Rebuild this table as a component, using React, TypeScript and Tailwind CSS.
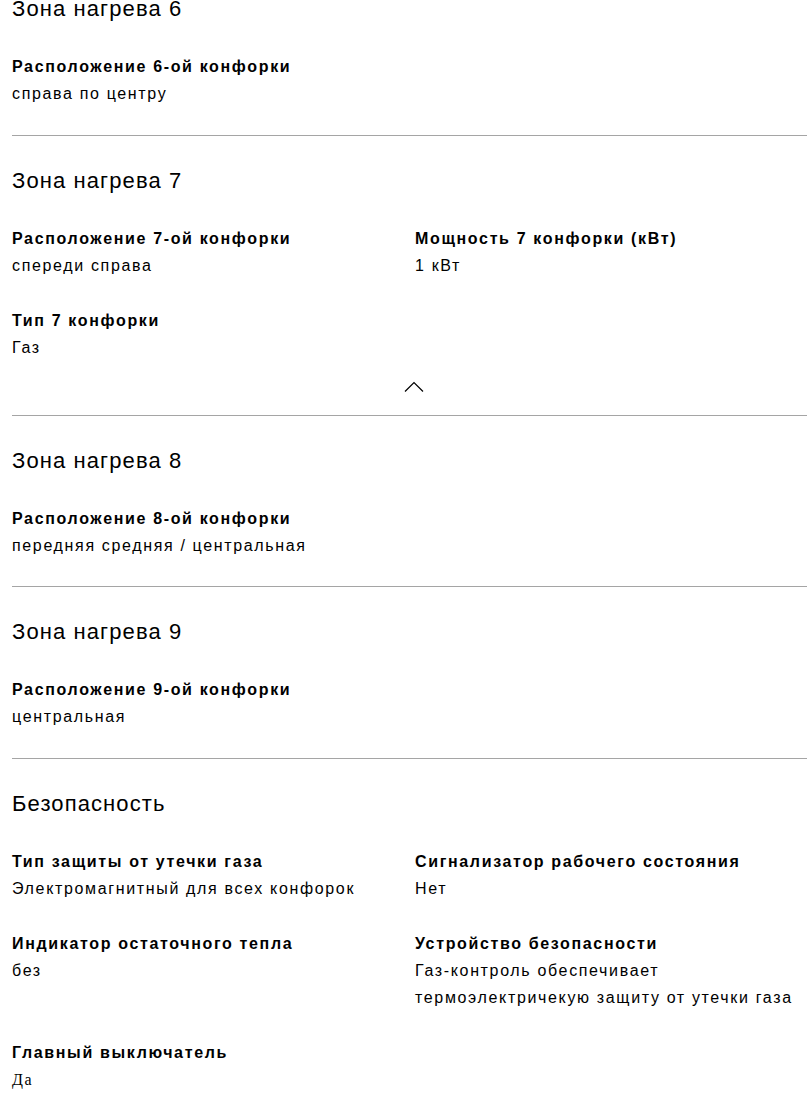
import { Fragment } from "react";

type Spec = { label: string; value: string[]; serif?: boolean };
type Section = { title: string; specs: Spec[]; collapsible?: boolean };

const sections: Section[] = [
  {
    title: "Зона нагрева 6",
    specs: [{ label: "Расположение 6-ой конфорки", value: ["справа по центру"] }],
  },
  {
    title: "Зона нагрева 7",
    collapsible: true,
    specs: [
      { label: "Расположение 7-ой конфорки", value: ["спереди справа"] },
      { label: "Мощность 7 конфорки (кВт)", value: ["1 кВт"] },
      { label: "Тип 7 конфорки", value: ["Газ"] },
    ],
  },
  {
    title: "Зона нагрева 8",
    specs: [
      { label: "Расположение 8-ой конфорки", value: ["передняя средняя / центральная"] },
    ],
  },
  {
    title: "Зона нагрева 9",
    specs: [{ label: "Расположение 9-ой конфорки", value: ["центральная"] }],
  },
  {
    title: "Безопасность",
    specs: [
      { label: "Тип защиты от утечки газа", value: ["Электромагнитный для всех конфорок"] },
      { label: "Сигнализатор рабочего состояния", value: ["Нет"] },
      { label: "Индикатор остаточного тепла", value: ["без"] },
      {
        label: "Устройство безопасности",
        value: ["Газ-контроль обеспечивает", "термоэлектричекую защиту от утечки газа"],
      },
      { label: "Главный выключатель", value: ["Да"], serif: true },
    ],
  },
];

function ChevronUp() {
  return (
    <svg width="20" height="11" viewBox="0 0 20 11" fill="none" className="-ml-[3px] text-black">
      <path d="M1 10.5 L10 1.5 L19 10.5" stroke="currentColor" strokeWidth="1.2" />
    </svg>
  );
}

export default function App() {
  return (
    <div className="w-[807px] overflow-hidden bg-white text-black font-['Liberation_Sans',Arial,sans-serif]">
      <div className="ml-3 w-[806px]">
        {sections.map((s, i) => (
          <Fragment key={s.title}>
            {i > 0 && <div className="h-px bg-[#a5a5a5]" />}
            <section className={`pt-[31px] ${i === 0 ? "-mt-[36px]" : ""} ${s.collapsible ? "pb-[23px]" : "pb-[27.5px]"}`}>
              <h3 className="text-[22px] leading-[28px] tracking-[1.1px]">{s.title}</h3>

              <div className="mt-[30px] grid grid-cols-2 gap-y-[28px]">
                {s.specs.map((sp) => (
                  <div key={sp.label}>
                    <div className="text-[16px] font-bold leading-[27px] tracking-[1.65px]">{sp.label}</div>
                    {sp.value.map((v) => (
                      <div
                        key={v}
                        className={`text-[16px] leading-[27px] tracking-[1.65px] ${
                          sp.serif ? "font-['Liberation_Serif',serif]" : ""
                        }`}
                      >
                        {v}
                      </div>
                    ))}
                  </div>
                ))}
              </div>

              {s.collapsible && (
                <div className="mt-[20px] flex justify-center">
                  <ChevronUp />
                </div>
              )}
            </section>
          </Fragment>
        ))}
      </div>
    </div>
  );
}
